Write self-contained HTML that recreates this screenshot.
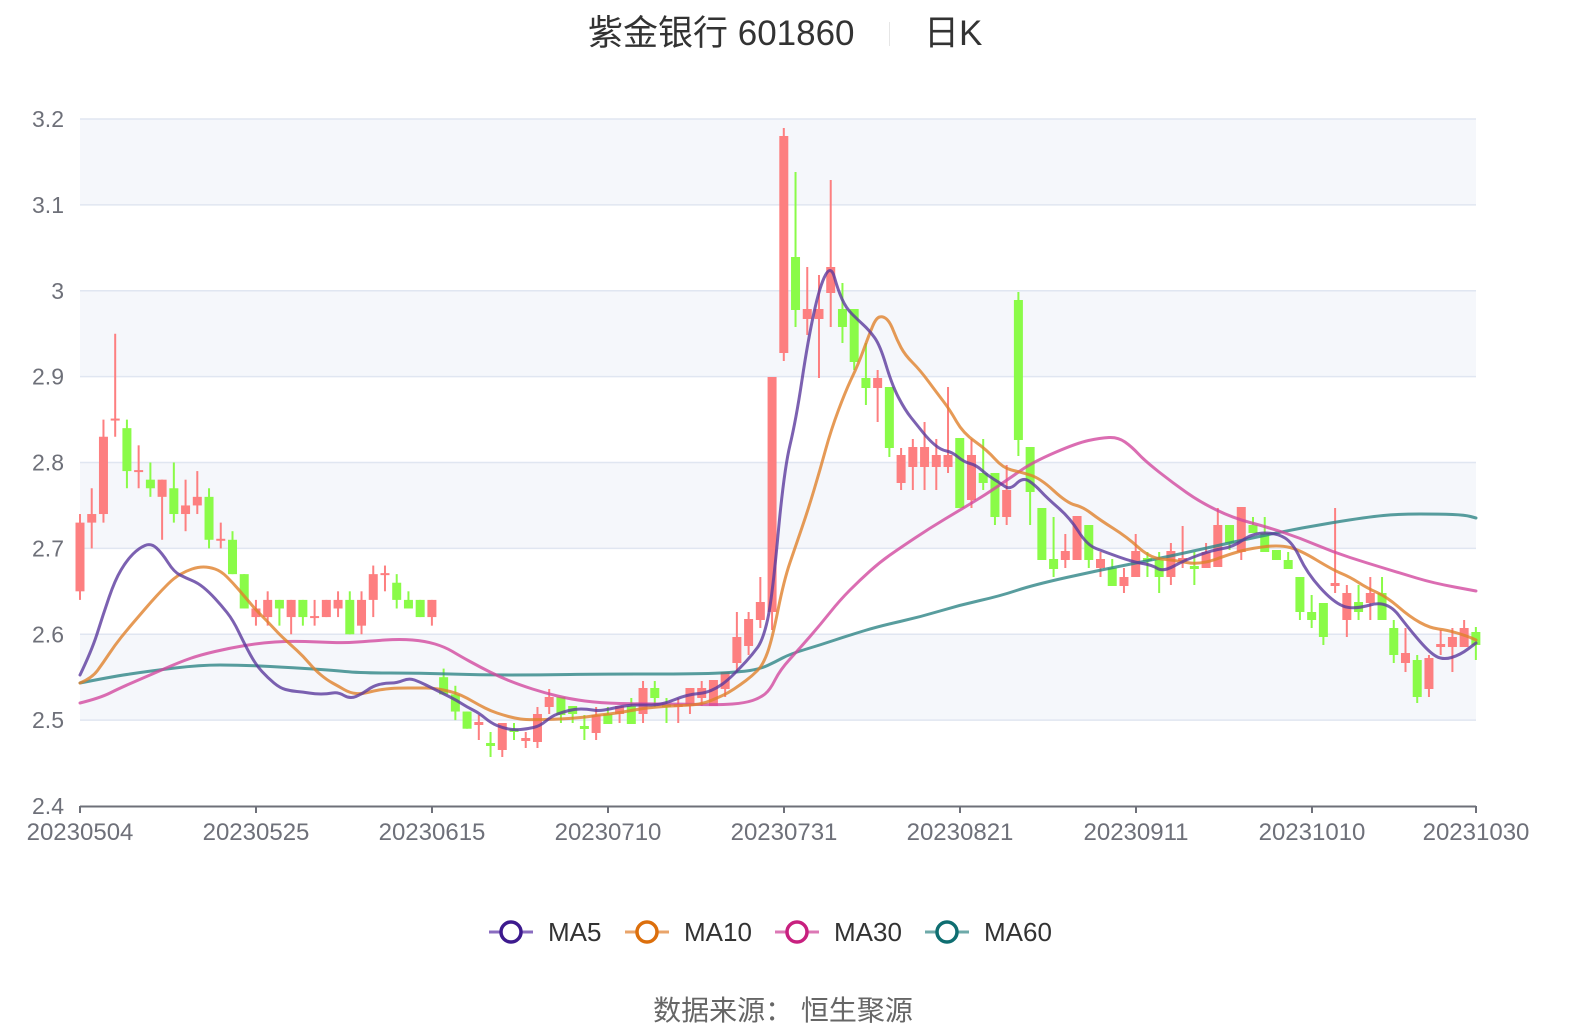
<!DOCTYPE html>
<html><head><meta charset="utf-8"><style>
html,body{margin:0;padding:0;background:#fff;}
body{width:1574px;height:1034px;overflow:hidden;position:relative;font-family:"Liberation Sans","Noto Sans CJK SC",sans-serif;}
.t{position:absolute;white-space:nowrap;}
</style></head><body>
<div class="t" style="left:588px;top:12px;font-size:35px;color:#333;line-height:44px;">紫金银行 601860</div>
<div style="position:absolute;left:889px;top:22px;width:1px;height:24px;background:#e6e6e6;"></div>
<div class="t" style="left:924px;top:12px;font-size:35px;color:#333;line-height:44px;">日K</div>
<svg id="c" width="1574" height="1034" style="position:absolute;left:0;top:0;" xmlns="http://www.w3.org/2000/svg"></svg>
<div class="t" style="left:0;width:1574px;text-align:center;top:994px;font-size:28px;color:#666;line-height:34px;left:-4px;">数据来源： 恒生聚源</div>
<script>
var S=document.getElementById('c'),h='';
function Y(p){return 806-(p-2.4)*858.75;}
function X(i){return 80+i*11.73;}
var bands=[[3.2,3.1],[3.0,2.9],[2.8,2.7],[2.6,2.5]];
bands.forEach(function(b){h+='<rect x="80" y="'+Y(b[0])+'" width="1396" height="'+(Y(b[1])-Y(b[0]))+'" fill="#f5f7fb"/>';});
for(var k=0;k<8;k++){var p=2.5+k*0.1,y=Y(p);h+='<line x1="80" x2="1476" y1="'+y+'" y2="'+y+'" stroke="#e0e6f1" stroke-width="1.5"/>';}
var yl=['2.4','2.5','2.6','2.7','2.8','2.9','3','3.1','3.2'];
yl.forEach(function(s,k){h+='<text x="64" y="'+(Y(2.4+k*0.1)+8)+'" text-anchor="end" font-size="23" fill="#6e7079" font-family="Liberation Sans,sans-serif">'+s+'</text>';});
h+='<line x1="80" x2="1476" y1="806.5" y2="806.5" stroke="#6e7079" stroke-width="2"/>';
var xl=['20230504','20230525','20230615','20230710','20230731','20230821','20230911','20231010','20231030'];
var xt=[80,256,432,608,784,960,1136,1312,1476];
xl.forEach(function(s,k){h+='<line x1="'+xt[k]+'" x2="'+xt[k]+'" y1="806" y2="813" stroke="#6e7079" stroke-width="2"/><text x="'+xt[k]+'" y="840" text-anchor="middle" font-size="24" fill="#6e7079" font-family="Liberation Sans,sans-serif">'+s+'</text>';});
var R='#fd7f80',G='#8afb48';
function candle(i,c,bt,bb,wt,wb){var x=X(i);if(bb-bt<2){bt-=1;bb+=1;}
h+='<line x1="'+x+'" x2="'+x+'" y1="'+wt+'" y2="'+wb+'" stroke="'+c+'" stroke-width="2"/>';
h+='<rect x="'+(x-4.5)+'" y="'+bt+'" width="9" height="'+(bb-bt)+'" fill="'+c+'"/>';}
var P=[[0,2.65,2.73,2.64,2.74,R],[1,2.73,2.74,2.70,2.77,R],[2,2.74,2.83,2.73,2.85,R],[3,2.85,2.85,2.83,2.95,R],[4,2.84,2.79,2.77,2.85,G],[5,2.79,2.79,2.77,2.82,R],[6,2.78,2.77,2.76,2.80,G],[7,2.76,2.78,2.71,2.78,R],[8,2.77,2.74,2.73,2.80,G],[9,2.74,2.75,2.72,2.78,R],[10,2.75,2.76,2.74,2.79,R],[11,2.76,2.71,2.70,2.77,G],[12,2.71,2.71,2.70,2.73,R],[13,2.71,2.67,2.67,2.72,G],[14,2.67,2.63,2.63,2.67,G],[15,2.62,2.63,2.61,2.64,R],[16,2.62,2.64,2.61,2.65,R],[17,2.64,2.63,2.61,2.64,G],[18,2.62,2.64,2.60,2.64,R],[19,2.64,2.62,2.61,2.64,G],[20,2.62,2.62,2.61,2.64,R],[21,2.62,2.64,2.62,2.64,R],[22,2.63,2.64,2.62,2.65,R],[23,2.64,2.60,2.60,2.65,G],[24,2.61,2.64,2.60,2.65,R],[25,2.64,2.67,2.62,2.68,R],[26,2.67,2.67,2.65,2.68,R],[27,2.66,2.64,2.63,2.67,G],[28,2.64,2.63,2.63,2.65,G],[29,2.64,2.62,2.62,2.64,G],[30,2.62,2.64,2.61,2.64,R],[31,2.55,2.53,2.53,2.56,G],[32,2.53,2.51,2.50,2.54,G],[33,2.51,2.49,2.49,2.51,G]];
P.forEach(function(a){var o=Y(a[1]),c=Y(a[2]);candle(a[0],a[5],Math.min(o,c),Math.max(o,c),Y(a[4]),Y(a[3]));});
var Q=[[34,R,723,724,715,740],[35,G,744,745,732,757],[36,R,723,750,723,757],[37,G,730,731,723,740],[38,R,739,740,732,748],[39,R,714,742,707,748],[40,R,697,707,689,714],[41,G,697,715,697,723],[42,G,706,714,706,723],[43,G,727,728,715,740],[44,R,715,733,707,740],[45,G,714,724,707,724],[46,R,706,714,706,723],[47,G,706,724,698,724],[48,R,688,714,681,723],[49,G,688,698,681,707],[50,G,705,706,698,723],[51,R,705,706,698,723],[52,R,688,706,688,714],[53,R,688,698,681,706],[54,R,680,706,680,706],[55,R,672,689,672,697],[56,R,637,663,612,672],[57,R,619,646,612,655],[58,R,602,620,577,628],[59,R,377,612,377,630],[60,R,136,353,128,361],[61,G,257,310,172,327],[62,R,309,319,267,335],[63,R,309,319,275,378],[64,R,267,293,180,327],[65,G,309,327,283,343],[66,G,309,362,309,370],[67,G,378,388,343,405],[68,R,378,388,370,422],[69,G,387,448,387,457],[70,R,455,483,448,490],[71,R,447,467,439,490],[72,R,447,467,422,490],[73,R,455,467,439,490],[74,R,455,467,387,473],[75,G,438,508,438,508],[76,R,455,500,439,508],[77,G,473,483,439,490],[78,G,473,517,473,525],[79,R,490,517,465,525],[80,G,300,440,292,456],[81,G,447,492,447,525],[82,G,508,560,508,560],[83,G,559,569,517,577],[84,R,551,560,534,568],[85,R,516,560,516,560],[86,G,525,560,525,568],[87,R,559,568,552,577],[88,G,568,586,559,586],[89,R,577,586,568,593],[90,R,551,577,534,577],[91,G,559,560,552,577],[92,G,560,577,552,593],[93,R,551,577,543,585],[94,R,559,560,526,568],[95,G,567,568,552,585],[96,R,552,568,543,568],[97,R,525,567,508,567],[98,G,525,543,525,550],[99,R,507,552,507,560],[100,G,525,533,517,533],[101,G,533,552,517,552],[102,G,550,560,550,560],[103,G,560,569,552,569],[104,G,577,612,577,620],[105,G,612,620,595,628],[106,G,603,637,603,645],[107,R,584,585,508,593],[108,R,593,620,585,637],[109,G,602,612,585,620],[110,R,593,603,577,620],[111,G,593,620,577,620],[112,G,628,655,620,663],[113,R,653,663,628,672],[114,G,660,697,655,703],[115,R,658,689,655,697],[116,R,645,646,630,655],[117,R,637,647,628,672],[118,R,628,647,620,647],[119,G,632,645,627,660]];
Q.forEach(function(a){candle(a[0],a[1],a[2],a[3],a[4],a[5]);});
function path(pts){var d='M'+pts[0][0]+','+pts[0][1];for(var i=1;i<pts.length-1;i++){var mx=(pts[i][0]+pts[i+1][0])/2,my=(pts[i][1]+pts[i+1][1])/2;d+=' Q'+pts[i][0]+','+pts[i][1]+' '+mx+','+my;}var l=pts[pts.length-1];d+=' L'+l[0]+','+l[1];return d;}
var MA5=[[80,675],[92,650],[103,615],[115,580],[127,560],[139,548],[151,543],[162,553],[174,572],[186,578],[198,583],[209,592],[221,605],[233,620],[245,645],[256,665],[268,678],[280,688],[291,691],[303,692],[315,694],[327,694],[338,692],[350,699],[362,694],[373,686],[385,683],[397,683],[409,678],[420,682],[432,688],[444,694],[456,700],[467,707],[479,713],[491,723],[503,728],[514,730],[527,729],[540,726],[552,716],[563,712],[575,709],[587,709],[598,711],[610,709],[623,706],[634,705],[646,705],[657,705],[669,702],[681,697],[693,694],[705,693],[717,688],[728,680],[740,668],[752,655],[763,640],[772,600],[784,470],[796,420],[808,340],[820,285],[831,265],[838,290],[846,308],[858,320],[869,330],[880,345],[892,385],[905,410],[917,425],[929,440],[941,450],[952,452],[964,462],[976,465],[987,475],[1000,483],[1010,490],[1023,477],[1035,485],[1047,498],[1070,518],[1087,545],[1105,552],[1133,562],[1152,565],[1163,572],[1185,560],[1213,550],[1233,547],[1253,533],[1277,533],[1293,543],[1307,573],[1333,602],[1353,610],[1387,600],[1410,630],[1430,653],[1443,660],[1460,655],[1476,643]];
var MA10=[[80,683],[92,678],[103,663],[115,645],[127,630],[139,616],[151,602],[162,590],[174,578],[186,571],[198,567],[209,567],[221,571],[233,583],[245,597],[256,610],[268,622],[280,635],[291,645],[303,656],[315,670],[327,680],[338,686],[350,693],[362,694],[373,691],[385,689],[397,688],[420,688],[432,688],[444,690],[456,693],[467,698],[479,705],[491,711],[503,715],[514,718],[527,720],[563,719],[587,717],[598,715],[610,714],[623,712],[634,710],[646,708],[669,706],[693,705],[705,703],[717,698],[728,693],[740,685],[752,676],[763,665],[772,640],[784,580],[796,545],[808,510],[820,470],[831,430],[846,390],[858,365],[869,335],[876,318],[883,316],[890,322],[897,340],[905,355],[920,370],[937,393],[950,410],[963,433],[987,450],[1003,468],[1020,472],[1040,478],[1067,503],[1083,507],[1100,520],[1127,537],[1150,558],[1173,560],[1200,565],[1233,553],[1253,548],[1280,545],[1300,550],[1333,570],[1350,577],[1367,588],[1387,597],[1410,617],[1430,628],[1447,630],[1467,636],[1476,640]];
var MA30=[[80,703],[100,698],[120,688],[150,675],[180,662],[200,655],[230,648],[260,643],[290,641],[320,642],[345,643],[370,641],[400,639],[425,641],[445,647],[460,656],[480,667],[500,677],[520,685],[545,693],[570,699],[600,703],[640,704],[680,704],[720,705],[745,703],[760,698],[770,690],[780,670],[800,648],[820,625],[840,600],[860,580],[880,562],[900,548],[930,528],[960,510],[985,495],[1010,478],[1033,462],[1077,443],[1100,438],[1118,437],[1132,447],[1145,461],[1173,483],[1200,502],[1233,518],[1267,527],[1300,538],[1333,552],[1367,563],[1400,573],[1433,583],[1476,591]];
var MA60=[[80,683],[110,677],[150,671],[200,665],[240,665],[280,667],[330,670],[360,673],[420,673],[480,675],[540,675],[600,674],[700,674],[740,672],[760,669],[775,662],[790,654],[820,645],[850,635],[880,626],[920,617],[960,605],[1000,596],[1033,585],[1100,570],[1167,557],[1233,542],[1300,528],[1367,517],[1400,514],[1440,514],[1465,515],[1476,518]];
[[MA60,'#2e8486'],[MA30,'#d2489f'],[MA10,'#e0812c'],[MA5,'#5b3a9e']].forEach(function(m){h+='<path d="'+path(m[0])+'" fill="none" stroke="'+m[1]+'" stroke-opacity="0.8" stroke-width="3" stroke-linejoin="round" stroke-linecap="round"/>';});
var lg=[[489,'MA5','#3d1a8e','#8a6cc0'],[625,'MA10','#dc6f0c','#e9a46a'],[775,'MA30','#c8207f','#dc78b5'],[925,'MA60','#0f6e71','#6eaaa9']];
lg.forEach(function(a){var x=a[0];h+='<line x1="'+x+'" x2="'+(x+44)+'" y1="932" y2="932" stroke="'+a[3]+'" stroke-width="3"/><circle cx="'+(x+22)+'" cy="932" r="10" fill="#fff" stroke="'+a[2]+'" stroke-width="3.5"/><text x="'+(x+59)+'" y="941" font-size="26" fill="#333" font-family="Liberation Sans,sans-serif">'+a[1]+'</text>';});
S.innerHTML=h;
</script>
</body></html>
